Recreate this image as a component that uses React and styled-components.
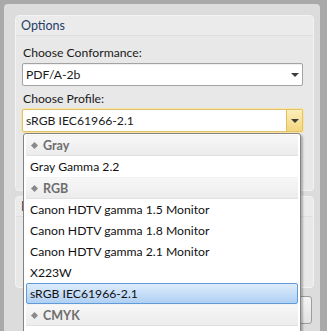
import styled, { createGlobalStyle } from 'styled-components';

const Global = createGlobalStyle`
  html, body {
    margin: 0;
    padding: 0;
    background: #a9a9a9;
  }
  body {
    font-family: 'Segoe UI', Lato, 'Noto Sans', sans-serif;
    font-size: 12.2px;
    color: #1a1a1a;
  }
`;

const Window = styled.div`
  width: 327px;
  height: 331px;
  box-sizing: border-box;
  padding: 4px 7px 0 4px;
  overflow: hidden;
  background: #a9a9a9;
`;

const Panel = styled.div`
  height: 340px;
  box-sizing: border-box;
  padding: 11px 6px 0 11px;
  background: #dcdcdc;
  border-radius: 4px 4px 0 0;
  display: flex;
  flex-direction: column;
  gap: 5px;
`;

const Group = styled.section`
  background: #e8e8e8;
  border: 1px solid #f3f3f3;
  border-radius: 4px;
  height: ${p => p.$height}px;
  box-sizing: border-box;
`;

const GroupHeader = styled.div`
  height: 19px;
  line-height: 19px;
  padding-left: 5px;
  font-size: 12.5px;
  color: #1f3d68;
  border-bottom: 1px solid #dedede;
  background: #ebebeb;
  border-radius: 4px 4px 0 0;
`;

const GroupBody = styled.div`
  padding: 8px 10px 0 6px;
  display: flex;
  flex-direction: column;
`;

const Label = styled.div`
  line-height: 18px;
  margin-bottom: 1px;
  padding-left: 1px;
`;

const ComboWrap = styled.div`
  position: relative;
  margin-bottom: ${p => p.$gap || 0}px;
`;

const Combo = styled.div`
  height: 23px;
  box-sizing: border-box;
  display: flex;
  align-items: center;
  background: #fff;
  border: 1px solid ${p => (p.$focus ? '#e3c26a' : '#a3a3a3')};
  border-radius: 2px;
  box-shadow: ${p => (p.$focus ? '0 0 0 1px #f6e4a8' : 'inset 0 1px 0 #f0f0f0')};
`;

const ComboText = styled.span`
  flex: 1;
  padding-left: 3px;
`;

const ArrowButton = styled.div`
  width: 15px;
  align-self: stretch;
  display: flex;
  align-items: center;
  justify-content: center;
  background: ${p => (p.$focus ? 'linear-gradient(#fbeebb, #f4d67c)' : 'transparent')};
  border-left: 1px solid ${p => (p.$focus ? '#e0bf62' : 'transparent')};
`;

const Arrow = styled.span`
  width: 0;
  height: 0;
  border-left: 4px solid transparent;
  border-right: 4px solid transparent;
  border-top: 4px solid #3c3c3c;
  margin-top: 1px;
`;

const Popup = styled.div`
  position: absolute;
  top: 24px;
  left: 1px;
  width: 278px;
  height: 220px;
  box-sizing: border-box;
  background: #fff;
  border: 1px solid #838383;
  border-radius: 3px;
  box-shadow: 2px 2px 2px rgba(0, 0, 0, 0.25);
  padding: 1px 2px;
  z-index: 5;
`;

const SectionRow = styled.div`
  height: ${p => p.$h}px;
  box-sizing: border-box;
  display: flex;
  align-items: center;
  gap: 4px;
  padding-left: 5px;
  background: linear-gradient(#f7f7f7, #ececec);
  border-bottom: 1px solid #e0e0e0;
  border-top: 1px solid #f2f2f2;
  color: #6e6e6e;
  font-weight: bold;
  font-size: 12.5px;
`;

const Diamond = styled.span`
  width: 5px;
  height: 5px;
  background: #8a8a8a;
  transform: rotate(45deg);
  margin: 0 2px 0 1px;
`;

const Item = styled.div`
  height: 21px;
  box-sizing: border-box;
  display: flex;
  align-items: center;
  padding-left: 3px;
  color: #111;
  border: 1px solid ${p => (p.$selected ? '#5f9bd9' : 'transparent')};
  border-radius: 2px;
  background: ${p => (p.$selected ? 'linear-gradient(#ddecfc, #b0d0f3)' : 'transparent')};
`;

const Footer = styled.div`
  display: flex;
  justify-content: flex-end;
  padding: 3px 2px 0 0;
`;

const Button = styled.div`
  width: 75px;
  height: 26px;
  border: 1px solid #9d9d9d;
  border-radius: 3px;
  background: linear-gradient(#f4f4f4, #e2e2e2);
`;

const groups = [
  { name: 'Gray', h: 21, items: ['Gray Gamma 2.2'] },
  {
    name: 'RGB',
    h: 22,
    items: [
      'Canon HDTV gamma 1.5 Monitor',
      'Canon HDTV gamma 1.8 Monitor',
      'Canon HDTV gamma 2.1 Monitor',
      'X223W',
      'sRGB IEC61966-2.1',
    ],
  },
  { name: 'CMYK', h: 22, items: [] },
];

const selected = 'sRGB IEC61966-2.1';

const App = () => (
  <Window>
    <Global />
    <Panel>
      <Group $height={176}>
        <GroupHeader>Options</GroupHeader>
        <GroupBody>
          <Label>Choose Conformance:</Label>
          <ComboWrap $gap={4}>
            <Combo>
              <ComboText>PDF/A-2b</ComboText>
              <ArrowButton>
                <Arrow />
              </ArrowButton>
            </Combo>
          </ComboWrap>
          <Label>Choose Profile:</Label>
          <ComboWrap>
            <Combo $focus>
              <ComboText>{selected}</ComboText>
              <ArrowButton $focus>
                <Arrow />
              </ArrowButton>
            </Combo>
            <Popup>
              {groups.map(g => (
                <div key={g.name}>
                  <SectionRow $h={g.h}>
                    <Diamond />
                    {g.name}
                  </SectionRow>
                  {g.items.map(it => (
                    <Item key={it} $selected={it === selected}>
                      {it}
                    </Item>
                  ))}
                </div>
              ))}
            </Popup>
          </ComboWrap>
        </GroupBody>
      </Group>
      <Group $height={92}>
        <GroupHeader>Fonts</GroupHeader>
      </Group>
      <Footer>
        <Button />
      </Footer>
    </Panel>
  </Window>
);

export default App;
